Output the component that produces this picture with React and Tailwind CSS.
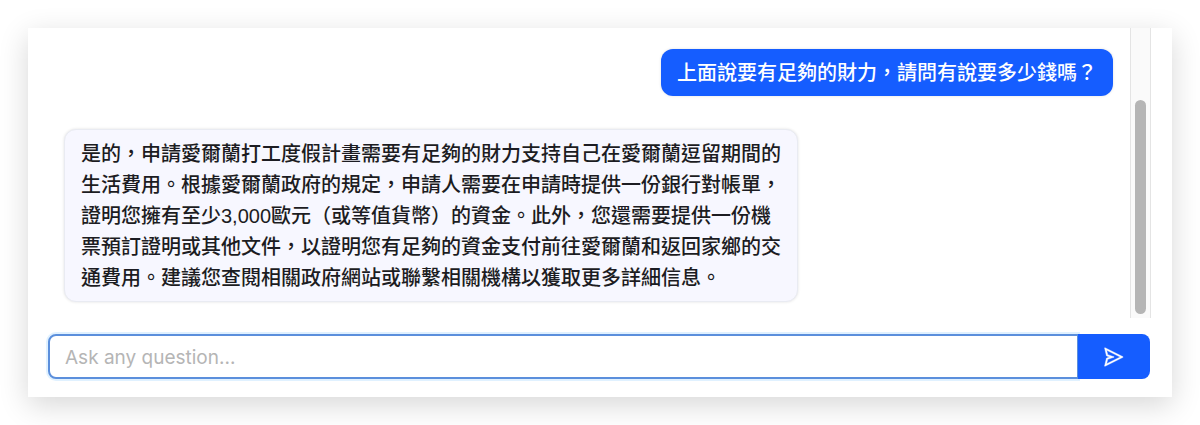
import { AiOutlineSend } from "react-icons/ai";

const messages = [
  { id: 1, from: "user", text: "上面說要有足夠的財力，請問有說要多少錢嗎？" },
  {
    id: 2,
    from: "bot",
    text: "是的，申請愛爾蘭打工度假計畫需要有足夠的財力支持自己在愛爾蘭逗留期間的生活費用。根據愛爾蘭政府的規定，申請人需要在申請時提供一份銀行對帳單，證明您擁有至少3,000歐元（或等值貨幣）的資金。此外，您還需要提供一份機票預訂證明或其他文件，以證明您有足夠的資金支付前往愛爾蘭和返回家鄉的交通費用。建議您查閱相關政府網站或聯繫相關機構以獲取更多詳細信息。",
  },
];

function Message({ from, text }) {
  const look =
    from === "user"
      ? "self-end bg-[#155dff] text-white"
      : "self-start border border-[#e9ebf2] bg-[#f7f7ff] text-[#1c1c22]";
  return (
    <p
      className={`max-w-[734px] rounded-xl px-4 pt-[9px] pb-[7px] text-[20px] leading-[31px] font-medium shadow-[0_0_3px_rgba(0,0,0,0.12)] ${look}`}
    >
      {text}
    </p>
  );
}

export default function App() {
  return (
    <div
      lang="zh-Hant"
      className="min-h-screen bg-white p-7 font-['Liberation_Sans','Noto_Sans_CJK_TC',sans-serif]"
    >
      <main className="bg-white pb-[18px] shadow-[0_8px_28px_rgba(0,0,0,0.16)]">
        <div className="flex pr-[21px] pl-9">
          <section className="flex grow flex-col gap-[33px] pt-[21px] pr-[17px] pb-4" aria-label="Conversation">
            {messages.map((m) => (
              <Message key={m.id} from={m.from} text={m.text} />
            ))}
          </section>
          <div className="flex w-[21px] shrink-0 flex-col justify-end border-x border-[#e4e4e4] bg-[#fafafa] px-1 pb-1">
            <div className="h-3/4 rounded-full bg-[#b5b5b5]" />
          </div>
        </div>
        <form className="mt-4 flex pr-[22px] pl-5" onSubmit={(e) => e.preventDefault()}>
          <input
            type="text"
            aria-label="Ask any question"
            placeholder="Ask any question..."
            className="h-[45px] min-w-0 grow rounded-l-lg border-2 border-r border-[#5b8fdc] bg-white px-[15px] pt-[2px] font-['Inter',sans-serif] text-[19px] text-[#1c1c22] shadow-[0_0_0_2px_#e0f1ff] outline-none placeholder:text-[#b5b5b5]"
          />
          <button
            type="submit"
            aria-label="Send"
            className="relative flex w-[72px] shrink-0 items-center justify-center rounded-r-lg bg-[#155dff] text-white"
          >
            <AiOutlineSend size={22} stroke="currentColor" strokeWidth={18} />
          </button>
        </form>
      </main>
    </div>
  );
}
